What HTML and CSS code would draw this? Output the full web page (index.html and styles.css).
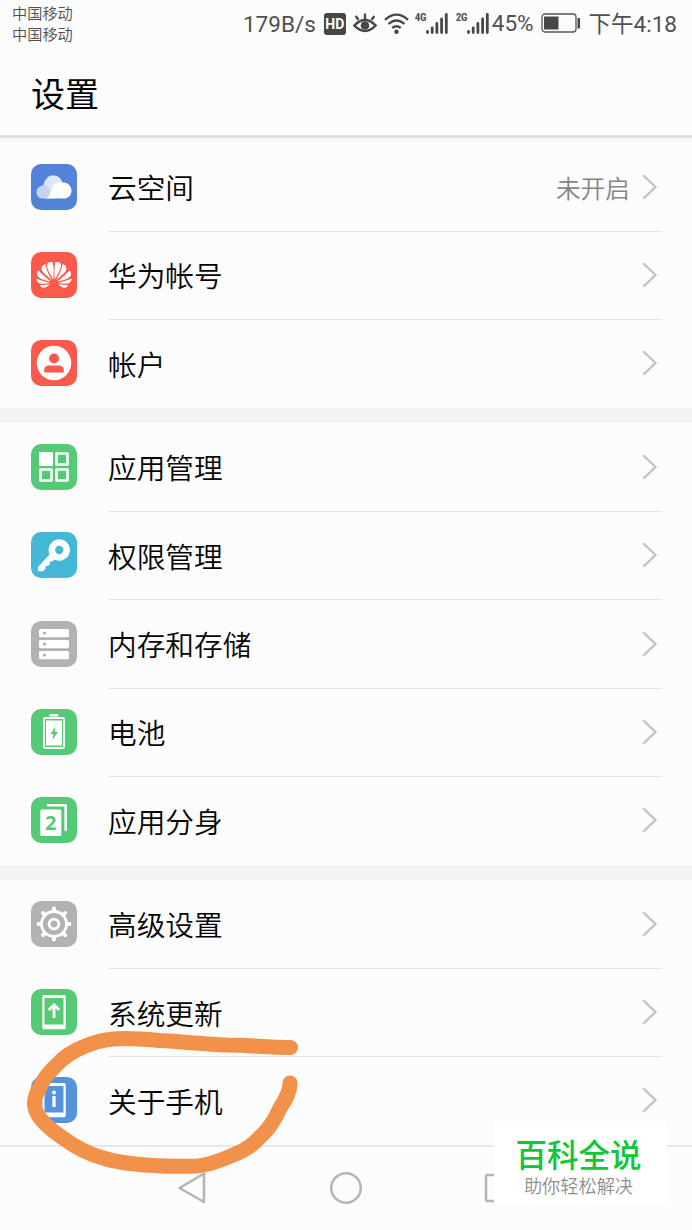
FILE: index.html
```html
<!DOCTYPE html>
<html lang="zh-CN">
  <head>
    <meta charset="UTF-8" />
    <title>设置</title>
    <link rel="stylesheet" href="styles.css">
  </head>
  <body>
    <svg class="sprite" width="0" height="0">
      <symbol id="chevron" viewBox="0 0 16 26">
        <path d="M2 2L13.5 13L2 24" fill="none" stroke="#c3c3c3" stroke-width="2.4" stroke-linecap="round" />
      </symbol>
      <symbol id="signal" viewBox="0 0 22 22">
        <path d="M1.5 18.5v1M6.200 15v4.500M10.900 10.500v9M15.600 6v13.500M20.300 1.500v18" stroke="#474747" stroke-width="2.800" stroke-linecap="round" />
      </symbol>
    </svg>

    <div class="status-bar">
      <div class="carriers">
        <div>中国移动</div>
        <div>中国移动</div>
      </div>
      <div class="indicators">
        <span class="speed">179B/s</span>
        <span class="hd">HD</span>
        <svg class="eye" width="24" height="22" viewBox="0 0 24 22">
          <path d="M1.300 12.500Q12 1.500 22.700 12.500Q12 23.500 1.300 12.500Z" fill="none" stroke="#474747" stroke-width="2.500" />
          <path d="M12 6V0.500M5.500 7L2.700 3M18.500 7L21.300 3" stroke="#474747" stroke-width="2.200" />
          <circle cx="12" cy="12.500" r="4.300" fill="#474747" />
        </svg>
        <svg class="wifi" width="25" height="22" viewBox="0 0 25 22">
          <path d="M1 6.800Q12.500-3.500 24 6.800M4.500 11Q12.500 4 20.500 11M8.300 15Q12.500 11.500 16.700 15" fill="none" stroke="#474747" stroke-width="2.300" />
          <circle cx="12.500" cy="18.700" r="2.200" fill="#474747" />
        </svg>
        <div class="network">
          <span>4G</span>
          <svg width="22" height="22"><use href="#signal" /></svg>
        </div>
        <div class="network">
          <span>2G</span>
          <svg width="22" height="22"><use href="#signal" /></svg>
        </div>
        <span class="percent">45%</span>
        <svg class="battery" width="40" height="20" viewBox="0 0 40 20">
          <rect x="1" y="1" width="34" height="18" rx="3" fill="none" stroke="#555" stroke-width="1.300" />
          <path d="M3 3.500h14.500v13H3zM36.500 5H39v10.500h-2.500z" fill="#474747" />
        </svg>
        <span class="time">下午4:18</span>
      </div>
    </div>

    <div class="header">
      <h1 class="title">设置</h1>
    </div>

    <div class="settings">
      <div class="group">
        <div class="row">
          <svg class="icon blue" viewBox="0 0 46 46">
            <path d="M12 34.500C7 34.500 5.500 31 5.500 28.200C5.500 24 9 21.500 12.500 21.500C14 14.500 18 11.500 22 11.500C27 11.500 30 14.500 31 18.500L25 34.500Z" fill="#c5d4f1" />
            <path d="M12.500 21.500C14 14.500 18 11.500 22 11.500C27 11.500 30 14.500 31 18.500C24 20 20.500 23 19.500 27C18.500 23.500 16 21.500 12.500 21.500Z" fill="#dee7f8" />
            <path d="M14.500 34.500C18.500 33 19 30.500 19.500 27.500C21 21.500 25 18.300 30.500 18.300C36.500 18.300 40.500 21.500 40.500 26.700C40.500 31.500 37 34.500 32.500 34.500Q23 34 14.500 34.500Z" fill="#fff" />
          </svg>
          <div class="content">
            <span class="label">云空间</span>
            <span class="value">未开启</span>
            <svg class="chevron"><use href="#chevron" /></svg>
          </div>
        </div>
        <div class="row">
          <svg class="icon red" viewBox="0 0 46 46">
            <g id="petals" fill="#fff">
              <path d="M22.200 27.500C19 22 15 15.500 16.200 12C17.200 9.800 19.500 9.700 21.500 10C23 15 22.800 22 22.200 27.500Z" />
              <path d="M20.800 28.200C16 24 10.800 20.300 10.500 16.800C10.500 14 12.500 12.700 14.300 12C15 17.500 18.500 23.500 20.800 28.200Z" />
              <path d="M19.800 29.500C13 28.200 7.500 26.500 6.200 23.500C5.500 21 6.500 19.500 7.500 18.500C11 22.800 15.800 26 19.800 29.500Z" />
              <path d="M19.200 31C14 31.500 10 32.500 7.800 31C5.800 29.800 5.300 28 5.500 26.500C10 28.700 14.800 29.800 19.200 31Z" />
              <path d="M18.500 32.300C16.500 35 13.500 36.300 11.500 35.700C10 35.200 9.200 34 8.800 33.200C12 33.300 15.500 32.700 18.500 32.300Z" />
            </g>
            <use href="#petals" transform="matrix(-1 0 0 1 46 0)" />
          </svg>
          <div class="content">
            <span class="label">华为帐号</span>
            <svg class="chevron"><use href="#chevron" /></svg>
          </div>
        </div>
        <div class="row">
          <svg class="icon red" viewBox="0 0 46 46">
            <circle cx="23" cy="23" r="17.300" fill="#fff" />
            <circle cx="23" cy="18.500" r="5" fill="#fb594b" />
            <path d="M13.200 32.500V30Q13.200 25.500 18.500 25.500H27.500Q32.800 25.500 32.800 30V32.500Z" fill="#fb594b" />
          </svg>
          <div class="content">
            <span class="label">帐户</span>
            <svg class="chevron"><use href="#chevron" /></svg>
          </div>
        </div>
      </div>

      <div class="group">
        <div class="row">
          <svg class="icon green" viewBox="0 0 46 46">
            <rect x="8" y="8" width="14" height="14" rx="1" fill="#fff" />
            <path d="M25.500 9.500H36.500V20.500H25.500ZM9.500 25.500H20.500V36.500H9.500ZM25.500 25.500H36.500V36.500H25.500Z" fill="none" stroke="#fff" stroke-width="2.600" stroke-linejoin="round" />
          </svg>
          <div class="content">
            <span class="label">应用管理</span>
            <svg class="chevron"><use href="#chevron" /></svg>
          </div>
        </div>
        <div class="row">
          <svg class="icon cyan" viewBox="0 0 46 46">
            <circle cx="28.300" cy="18" r="7.400" fill="none" stroke="#fff" stroke-width="6.500" />
            <path d="M19 22L7 35V39.200H12L14.500 36.700V34H17L19 32V29.500H21L25.500 26.500Z" fill="#fff" />
          </svg>
          <div class="content">
            <span class="label">权限管理</span>
            <svg class="chevron"><use href="#chevron" /></svg>
          </div>
        </div>
        <div class="row">
          <svg class="icon gray" viewBox="0 0 46 46">
            <g fill="#fff">
              <rect x="8" y="8" width="30" height="8.200" rx="1.500" />
              <rect x="8" y="19" width="30" height="8.200" rx="1.500" />
              <rect x="8" y="30" width="30" height="8.200" rx="1.500" />
            </g>
            <g fill="#b2b2b2">
              <circle cx="13.500" cy="12.100" r="1.700" />
              <circle cx="13.500" cy="23.100" r="1.700" />
              <circle cx="13.500" cy="34.100" r="1.700" />
            </g>
          </svg>
          <div class="content">
            <span class="label">内存和存储</span>
            <svg class="chevron"><use href="#chevron" /></svg>
          </div>
        </div>
        <div class="row">
          <svg class="icon green" viewBox="0 0 46 46">
            <rect x="18.500" y="5" width="9" height="2.500" rx="1" fill="#fff" />
            <rect x="13" y="9" width="20" height="30" rx="1" fill="none" stroke="#fff" stroke-width="1.800" />
            <rect x="15" y="11.500" width="16" height="25" fill="#fff" />
            <path d="M24.500 17.500L19.500 25H22.500L21.500 31L27 23H23.800Z" fill="#54ca77" />
          </svg>
          <div class="content">
            <span class="label">电池</span>
            <svg class="chevron"><use href="#chevron" /></svg>
          </div>
        </div>
        <div class="row">
          <svg class="icon green" viewBox="0 0 46 46">
            <path d="M17 8.200H34.700V33" fill="none" stroke="#fff" stroke-width="2.500" stroke-linecap="round" stroke-linejoin="round" />
            <rect x="9.300" y="12.500" width="21" height="26.500" rx="1.500" fill="#fff" />
            <text class="clone-number" x="19.700" y="33">2</text>
          </svg>
          <div class="content">
            <span class="label">应用分身</span>
            <svg class="chevron"><use href="#chevron" /></svg>
          </div>
        </div>
      </div>

      <div class="group">
        <div class="row">
          <svg class="icon gray" viewBox="0 0 46 46">
            <g fill="none" stroke="#fff">
              <circle cx="23" cy="23" r="12.500" stroke-width="2.800" />
              <circle cx="23" cy="23" r="4.900" stroke-width="2.900" />
              <path d="M23 10V7.500M23 36V38.500M10 23H7.500M36 23H38.500M13.800 13.800L12 12M32.200 13.800L34 12M13.800 32.200L12 34M32.200 32.200L34 34" stroke-width="4" stroke-linecap="round" />
            </g>
          </svg>
          <div class="content">
            <span class="label">高级设置</span>
            <svg class="chevron"><use href="#chevron" /></svg>
          </div>
        </div>
        <div class="row">
          <svg class="icon green" viewBox="0 0 46 46">
            <path d="M11.300 7.500Q11.300 6 12.800 6H33.200Q34.700 6 34.700 7.500V38.700Q34.700 40.200 33.200 40.200H12.800Q11.300 40.200 11.300 38.700ZM13.500 9V35.500H32.500V9Z" fill="#fff" fill-rule="evenodd" />
            <path d="M23 29V16M17.800 21L23 15.800L28.200 21" fill="none" stroke="#fff" stroke-width="2.900" />
          </svg>
          <div class="content">
            <span class="label">系统更新</span>
            <svg class="chevron"><use href="#chevron" /></svg>
          </div>
        </div>
        <div class="row">
          <svg class="icon sky" viewBox="0 0 46 46">
            <path d="M11.300 7.500Q11.300 6 12.800 6H33.200Q34.700 6 34.700 7.500V38.700Q34.700 40.200 33.200 40.200H12.800Q11.300 40.200 11.300 38.700ZM13.500 9V35.500H32.500V9Z" fill="#fff" fill-rule="evenodd" />
            <circle cx="23" cy="15.500" r="1.900" fill="#fff" />
            <path d="M23 19V30" stroke="#fff" stroke-width="3.200" />
          </svg>
          <div class="content">
            <span class="label">关于手机</span>
            <svg class="chevron"><use href="#chevron" /></svg>
          </div>
        </div>
      </div>
    </div>

    <div class="nav-bar">
      <svg width="32" height="36" viewBox="0 0 32 36">
        <path d="M28 3.500V32L3.500 18Z" fill="none" stroke="#b5b5b5" stroke-width="2.500" stroke-linejoin="round" />
      </svg>
      <svg width="36" height="36" viewBox="0 0 36 36">
        <circle cx="18" cy="18" r="14.800" fill="none" stroke="#b5b5b5" stroke-width="2.500" />
      </svg>
      <svg width="32" height="36" viewBox="0 0 32 36">
        <rect x="2" y="5" width="26" height="26" rx="1.500" fill="none" stroke="#b5b5b5" stroke-width="2.500" />
      </svg>
    </div>

    <!-- hand-drawn circle around the last entry -->
    <svg class="marker" width="290" height="160" viewBox="20 1020 290 160">
      <path d="M290.500 1047.500C268 1047.500 248 1045 226.500 1045C203 1044 182 1041.500 160 1040.500C143 1039 128 1037.500 113 1039C103 1040 93 1042.500 83 1047C72 1051.500 63 1058 56.500 1065C49 1072 43.500 1079 40 1087C35 1095 33 1104 36 1111C40 1121 51 1130 63 1138C75 1147 88 1154 103 1158C119 1163 136 1164.500 153 1165.500C168 1166.500 184 1166.500 197 1166C210 1165 222 1160 233 1155C244 1151 253 1145 260 1137C269 1129 275 1120 280 1108C286 1099 290 1092 290 1083" />
    </svg>

    <div class="badge">
      <div class="badge-title">百科全说</div>
      <div class="badge-text">助你轻松解决</div>
    </div>
  </body>
</html>
```
FILE: styles.css
```css
:root {
  --background-color: #fcfcfc;
  --gap-color: #f3f3f3;
  --border-color: #e4e4e4;
  --status-color: #505050;
}

* {
  box-sizing: border-box;
}

body {
  position: relative;
  width: 692px;
  height: 1230px;
  margin: 0;
  overflow: hidden;
  background-color: var(--background-color);
  color: #050505;
  font-family: Roboto, "Noto Sans CJK SC", sans-serif;
}

svg {
  display: block;
  flex-shrink: 0;
}

.sprite {
  display: none;
}

.status-bar {
  display: flex;
  justify-content: space-between;
  height: 47px;
  padding: 4px 15px 0 12px;
  color: var(--status-color);
}

.carriers {
  font-size: 15.2px;
  font-weight: 350;
  line-height: 21px;
}

.indicators {
  display: flex;
  align-items: center;
  gap: 7px;
  height: 40px;
  font-size: 22.5px;
  line-height: 40px;
  white-space: nowrap;
}

.hd {
  width: 22px;
  height: 22px;
  margin-left: 1px;
  border-radius: 3px;
  background-color: #474747;
  color: white;
  font-size: 14px;
  font-weight: 700;
  line-height: 22px;
  text-align: center;
}

.eye,
.wifi {
  margin-top: -1px;
}

.network {
  display: flex;
  align-items: flex-start;
  margin-right: 2px;
  margin-left: -1px;
}

.network span {
  width: 11px;
  font-family: "Roboto Condensed", Roboto, sans-serif;
  font-size: 11px;
  font-weight: 700;
  line-height: 10px;
  letter-spacing: -0.3px;
}

.percent {
  margin-top: -2px;
  margin-left: -6px;
}

.battery {
  margin-top: -2px;
}

.time {
  margin-left: 1px;
}

.header {
  height: 95.4px;
  overflow: hidden;
  border-bottom: 4px solid #f5f5f5;
  box-shadow: inset 0 -3px 0 #e0e0e0;
}

.title {
  margin: 0;
  padding-left: 31px;
  font-size: 34px;
  font-weight: 400;
  line-height: 97px;
}

.group + .group {
  border-top: 15.2px solid var(--gap-color);
}

.row {
  display: flex;
  align-items: center;
  gap: 31px;
  height: 88.4px;
  padding: 0 30px 0 31px;
}

.icon {
  width: 46px;
  height: 46px;
  border-radius: 10px;
}

.blue {
  background-color: #5283d8;
}

.red {
  background-color: #fb594b;
}

.green {
  background-color: #54ca77;
}

.cyan {
  background-color: #45b8d8;
}

.gray {
  background-color: #b2b2b2;
}

.sky {
  background-color: #5594dc;
}

.content {
  display: flex;
  flex: 1;
  align-self: stretch;
  align-items: center;
  margin-bottom: -1px;
  border-bottom: 1px solid var(--border-color);
}

.row:last-child .content {
  border-bottom-color: transparent;
}

.label {
  flex: 1;
  font-size: 28.7px;
  font-weight: 350;
}

.value {
  margin-right: 12px;
  color: #858585;
  font-size: 24.7px;
  font-weight: 350;
}

.chevron {
  width: 16px;
  height: 26px;
  margin-right: 4px;
}

.clone-number {
  fill: #54ca77;
  font-family: "Open Sans", sans-serif;
  font-size: 20px;
  font-weight: 700;
  text-anchor: middle;
}

.nav-bar {
  display: flex;
  justify-content: center;
  align-items: center;
  gap: 120px;
  height: 85px;
  border-top: 2px solid #e6e8e8;
}

.marker {
  position: absolute;
  top: 1020px;
  left: 20px;
  fill: none;
  stroke: #f2914a;
  stroke-width: 15px;
  stroke-linecap: round;
}

.badge {
  position: absolute;
  top: 1121px;
  left: 494px;
  width: 173px;
  height: 84px;
  padding: 16px 4px 0 0;
  background-color: white;
  text-align: center;
}

.badge-title {
  color: #12c637;
  font-size: 31.5px;
  font-weight: 500;
  line-height: 39px;
}

.badge-text {
  color: #8e8e8e;
  font-size: 18.2px;
  font-weight: 350;
  line-height: 22px;
}
```
